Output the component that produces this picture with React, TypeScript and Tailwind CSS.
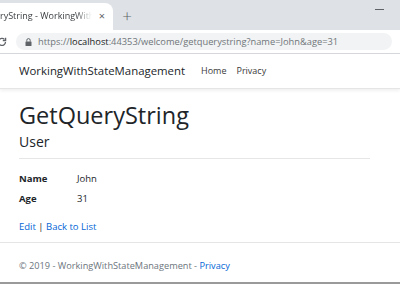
const font = { fontFamily: '"Open Sans", "Noto Sans", Arial, sans-serif' };

function Browser() {
  return (
    <div className="bg-[#dee1e6]">
      <div className="flex h-[30px] items-end">
        <div className="flex h-[27px] w-[113px] items-center rounded-tr-[8px] bg-white pr-[8px] pb-[2px]">
          <span className="w-[92px] overflow-hidden whitespace-nowrap text-[9px] text-[#3c4043] [mask-image:linear-gradient(to_right,black_82%,transparent)]">
            ryString - WorkingWithSt
          </span>
          <span className="ml-auto text-[11px] leading-none text-[#5f6368]">×</span>
        </div>
        <div className="flex h-[27px] w-[28px] items-center justify-center pb-[2px] text-[17px] font-light leading-none text-[#5f6368]">
          +
        </div>
        <div className="flex-1" />
        <div className="mb-[20px] mr-[16px] h-px w-[9px] bg-[#5f6368]" />
      </div>
      <div className="flex h-[24px] items-center gap-[9px] border-b border-[#d5d7da] bg-white pr-2">
        <svg width="10" height="10" viewBox="0 0 10 10" className="-ml-[3px] text-[#5f6368]">
          <path d="M8.5 5a3.5 3.5 0 1 1-1-2.5" fill="none" stroke="currentColor" strokeWidth="1.3" />
          <path d="M8.6 0.8v2.8H5.8" fill="none" stroke="currentColor" strokeWidth="1.3" />
        </svg>
        <div className="flex h-[17px] flex-1 items-center gap-[6px] rounded-full bg-[#f1f3f4] pl-[9px]">
          <svg width="7" height="8" viewBox="0 0 7 8" className="text-[#5f6368]">
            <rect x="0.5" y="3.5" width="6" height="4.5" rx="0.5" fill="currentColor" />
            <path d="M1.8 3.6V2.3a1.7 1.7 0 0 1 3.4 0v1.3" fill="none" stroke="currentColor" strokeWidth="1" />
          </svg>
          <span className="whitespace-nowrap text-[9.3px] text-[#70757a]">
            https://<span className="text-[#202124]">localhost</span>:44353/welcome/getquerystring?name=John&amp;age=31
          </span>
        </div>
      </div>
    </div>
  );
}

export default function App() {
  return (
    <div className="h-[284px] w-[400px] overflow-hidden bg-white text-[#212529]" style={font}>
      <Browser />
      <nav className="flex h-[35px] items-center gap-[16px] border-b border-[#e5e5e5] px-[19px] shadow-[0_2px_3px_rgba(0,0,0,0.06)]">
        <span className="text-[11.4px] text-[#212529]">WorkingWithStateManagement</span>
        <div className="flex gap-[10px] text-[9px] text-[#3a3a3a]">
          <span>Home</span>
          <span>Privacy</span>
        </div>
      </nav>
      <main className="px-[19px] pt-[11px]">
        <h1 className="text-[23.5px] leading-[30px] font-normal">GetQueryString</h1>
        <h4 className="mt-[2px] text-[14px] leading-[20px]">User</h4>
        <div className="mt-[6px] mr-[11px] border-t border-[#e6e6e6]" />
        <dl className="mt-[13px] grid grid-cols-[58px_1fr] gap-y-[6px] text-[9.5px] leading-[14px]">
          <dt className="font-bold">Name</dt>
          <dd>John</dd>
          <dt className="font-bold">Age</dt>
          <dd>31</dd>
        </dl>
        <div className="mt-[14px] text-[9.5px] leading-[14px] text-[#0366d6]">
          <span>Edit</span> <span className="text-[#212529]">|</span> <span>Back to List</span>
        </div>
      </main>
      <footer className="mt-[8px] h-[40px] border-t border-[#e5e5e5] px-[19px] pt-[16px] text-[9.2px] text-[#6c757d]">
        © 2019 - WorkingWithStateManagement - <span className="text-[#0366d6]">Privacy</span>
      </footer>
      <div className="h-[2px] bg-[#9a9a9a]" />
    </div>
  );
}
